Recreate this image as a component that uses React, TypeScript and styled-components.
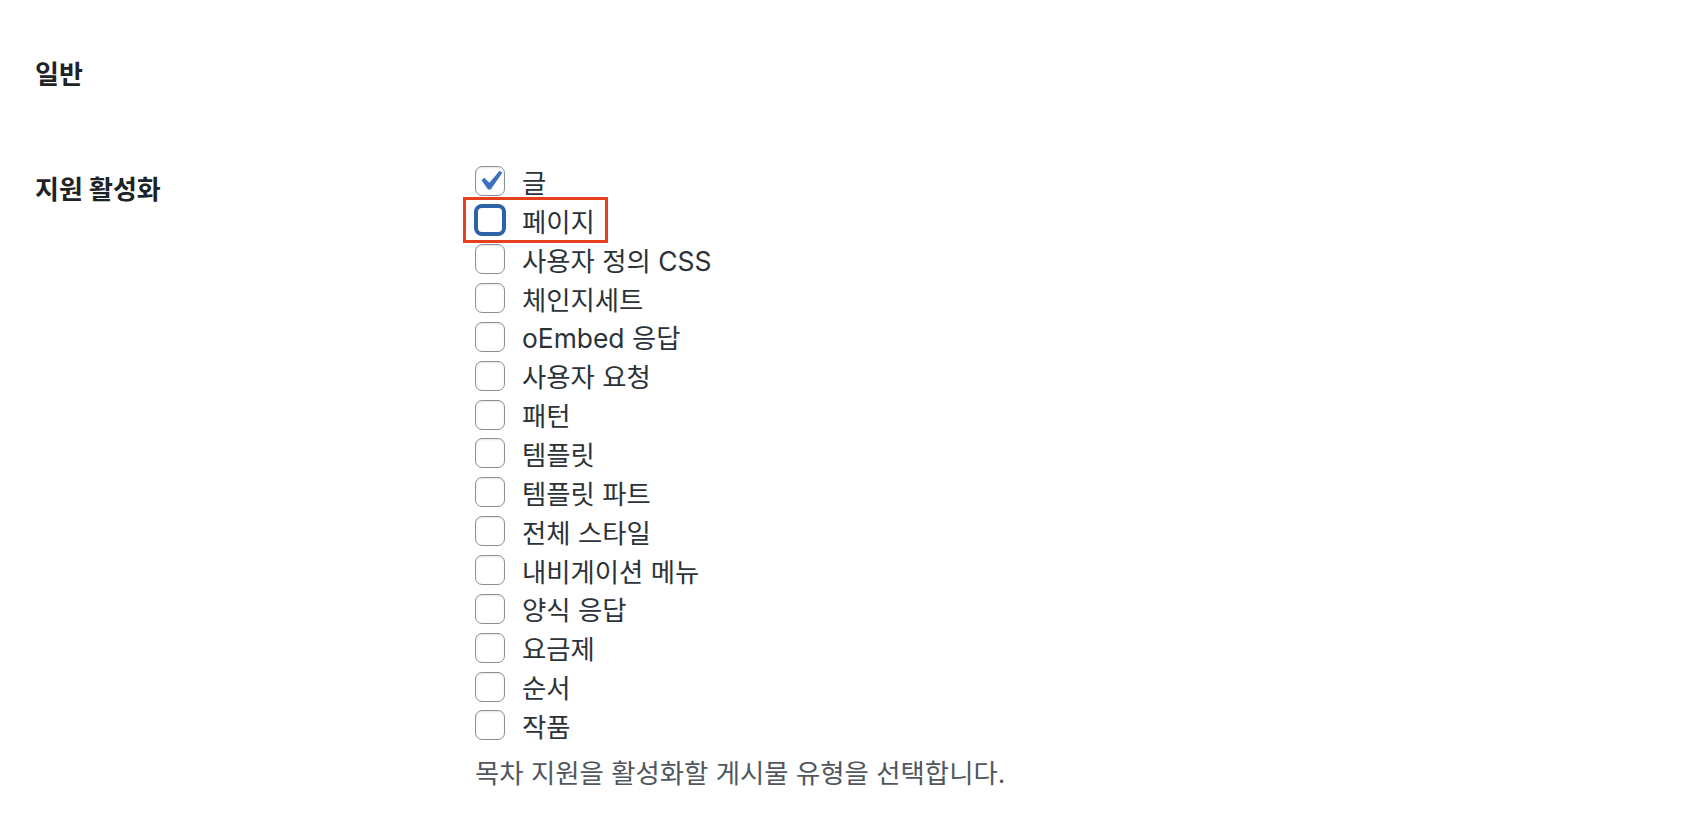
import styled, { createGlobalStyle } from "styled-components";

type PostType = {
  id: string;
  label: string;
  checked?: boolean;
  focused?: boolean;
};

const postTypes: PostType[] = [
  { id: "post", label: "글", checked: true },
  { id: "page", label: "페이지", focused: true },
  { id: "custom_css", label: "사용자 정의 CSS" },
  { id: "changeset", label: "체인지세트" },
  { id: "oembed", label: "oEmbed 응답" },
  { id: "user_request", label: "사용자 요청" },
  { id: "wp_block", label: "패턴" },
  { id: "wp_template", label: "템플릿" },
  { id: "wp_template_part", label: "템플릿 파트" },
  { id: "wp_global_styles", label: "전체 스타일" },
  { id: "wp_navigation", label: "내비게이션 메뉴" },
  { id: "feedback", label: "양식 응답" },
  { id: "plan", label: "요금제" },
  { id: "order", label: "순서" },
  { id: "portfolio", label: "작품" },
];

function App() {
  return (
    <>
      <GlobalStyle />
      <Page>
        <SectionTitle>일반</SectionTitle>

        <FormRow>
          <RowLabel>지원 활성화</RowLabel>

          <Field>
            <OptionList>
              {postTypes.map((type) => (
                <Option key={type.id} $highlight={type.focused}>
                  <Box $checked={type.checked} $focused={type.focused}>
                    {type.checked && (
                      <svg viewBox="0 0 20 20" width="40" height="40">
                        <path
                          d="M14.83 4.89l1.34.94-5.81 8.38H9.02L5.78 9.67l1.34-1.25 2.57 2.4z"
                          fill="#3a72c0"
                        />
                      </svg>
                    )}
                  </Box>
                  <span>{type.label}</span>
                </Option>
              ))}
            </OptionList>

            <Description>목차 지원을 활성화할 게시물 유형을 선택합니다.</Description>
          </Field>
        </FormRow>
      </Page>
    </>
  );
}

const GlobalStyle = createGlobalStyle`
  body {
    margin: 0;
    background: #ffffff;
    font-family: Inter, "Noto Sans CJK KR", sans-serif;
    color: #1d2327;
  }
`;

const Page = styled.div`
  width: 1698px;
  min-height: 840px;
  padding: 56px 0 0 35px;
  box-sizing: border-box;
`;

const SectionTitle = styled.h2`
  margin: 0;
  font-size: 26px;
  font-weight: 700;
  line-height: 38px;
  color: #1d2327;
`;

const FormRow = styled.div`
  display: grid;
  grid-template-columns: 440px 1fr;
  margin-top: 68px;
`;

const RowLabel = styled.div`
  font-size: 26px;
  font-weight: 700;
  line-height: 38px;
  padding-top: 9px;
  color: #1d2327;
`;

const Field = styled.div`
  display: flex;
  flex-direction: column;
`;

const OptionList = styled.div`
  display: flex;
  flex-direction: column;
  align-items: flex-start;
`;

const Option = styled.label<{ $highlight?: boolean }>`
  position: relative;
  display: flex;
  align-items: center;
  gap: 17px;
  height: 38.86px;
  font-size: 26.4px;
  color: #2c3338;

  ${({ $highlight }) =>
    $highlight &&
    `
    &::after {
      content: "";
      position: absolute;
      top: -4px;
      bottom: -3px;
      left: -12px;
      right: -13px;
      border: 3px solid #e4401d;
    }
  `}
`;

const Box = styled.span<{ $checked?: boolean; $focused?: boolean }>`
  display: flex;
  align-items: center;
  justify-content: center;
  width: 30px;
  height: 30px;
  box-sizing: border-box;
  border-radius: 7px;
  background: #ffffff;
  overflow: visible;
  border: ${({ $focused }) =>
    $focused ? "3px solid #2e62a8" : "1.5px solid #8c8f94"};
  box-shadow: ${({ $focused }) =>
    $focused ? "0 0 0 1px #2e62a8" : "inset 0 1px 2px rgba(0, 0, 0, 0.1)"};

  svg {
    flex: none;
    margin: -7px;
  }
`;

const Description = styled.p`
  margin: 9px 0 0;
  font-size: 26.4px;
  line-height: 38px;
  color: #50575e;
`;

export default App;
